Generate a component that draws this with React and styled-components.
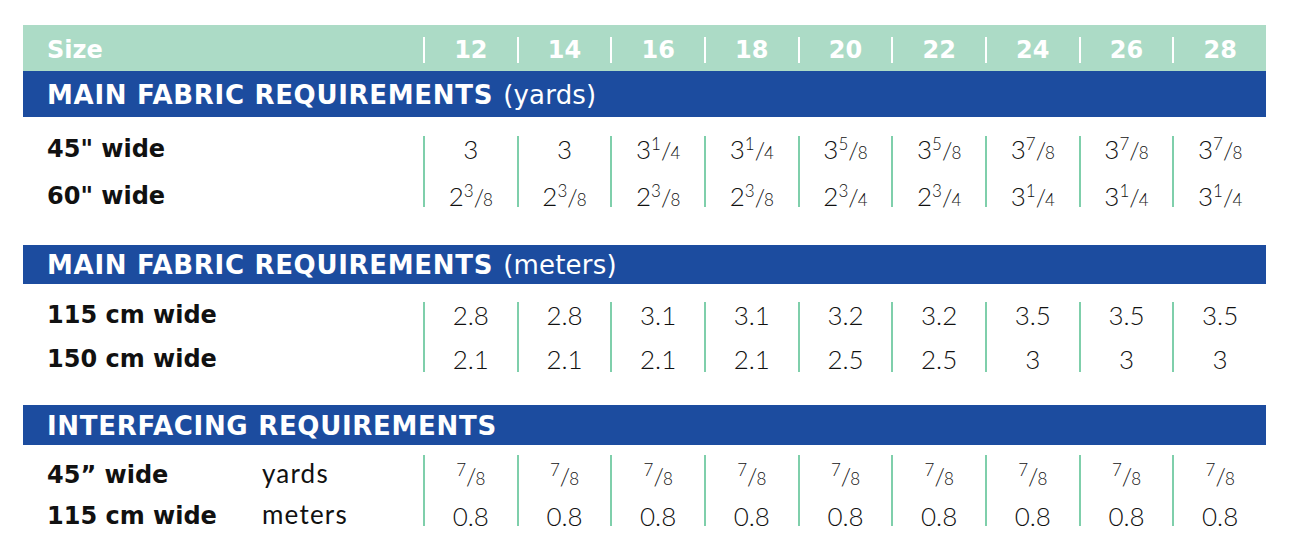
import React from "react";
import styled, { createGlobalStyle } from "styled-components";

const GlobalStyle = createGlobalStyle`
  body {
    margin: 0;
    background: #fff;
    font-family: "DejaVu Sans", "Liberation Sans", sans-serif;
  }
`;

const Table = styled.div`
  width: 1243px;
  margin: 25px 0 0 23px;
  padding-bottom: 18px;
`;

const SizeRow = styled.div`
  display: grid;
  grid-template-columns: 400px repeat(9, 1fr);
  align-items: center;
  height: 46px;
  padding-top: 3px;
  box-sizing: border-box;
  background: #acdbc6;
  color: #fff;
  font-weight: 700;
  font-size: 24px;
`;

const SizeLabel = styled.div`
  padding-left: 24px;
`;

const SizeCell = styled.div`
  border-left: 2px solid #fff;
  line-height: 26px;
  text-align: center;
`;

const Bar = styled.div`
  display: flex;
  align-items: center;
  gap: 10px;
  height: ${(p) => p.$h}px;
  margin-top: ${(p) => p.$top}px;
  padding: 1px 0 0 24px;
  box-sizing: border-box;
  background: #1c4c9f;
  color: #fff;
  font-size: 26px;
  font-weight: 700;
  letter-spacing: 0.7px;

  span {
    font-weight: 400;
    letter-spacing: 0.2px;
  }
`;

const Body = styled.div`
  display: grid;
  grid-template-columns: 400px repeat(9, 1fr);
  height: ${(p) => p.$h}px;
  margin-top: ${(p) => p.$top}px;
`;

const LabelCol = styled.div`
  display: flex;
  flex-direction: column;
  justify-content: space-between;
  padding: ${(p) => p.$pt}px 0 0 24px;
`;

const Label = styled.div`
  display: flex;
  align-items: center;
  height: ${(p) => p.$lh}px;
  font-size: 24px;
  font-weight: 700;
  color: #111;
`;

const Name = styled.span`
  width: 215px;
  flex: none;
`;

const Unit = styled.span`
  position: relative;
  top: -2px;
  font-family: "Lato", sans-serif;
  font-weight: 400;
  font-size: 26px;
  letter-spacing: 1.2px;
`;

const ValueCol = styled.div`
  display: flex;
  flex-direction: column;
  justify-content: space-between;
  align-items: center;
  padding-top: ${(p) => p.$pt}px;
  border-left: 2px solid #7fcfab;
  font-family: "Lato", sans-serif;
  font-size: 26px;
  font-weight: 300;
  color: #111;
`;

const Value = styled.div`
  display: flex;
  align-items: center;
  height: ${(p) => p.$lh}px;
`;

const FracBox = styled.span`
  display: inline-flex;
  align-items: baseline;
  font-feature-settings: "frac" 0, "calt" 0;
`;

const Num = styled.span`
  font-size: 17px;
  position: relative;
  top: -9px;
`;

const Den = styled.span`
  font-size: 17px;
`;

const Slash = styled.span`
  font-size: 24px;
  margin: 0 -1px 0 0;
`;

const Frac = ({ w, n, d }) => (
  <FracBox>
    {w}
    <Num>{n}</Num>
    <Slash>/</Slash>
    <Den>{d}</Den>
  </FracBox>
);

const sizes = [12, 14, 16, 18, 20, 22, 24, 26, 28];

const yards45 = [["3"], ["3"], ["3", 1, 4], ["3", 1, 4], ["3", 5, 8], ["3", 5, 8], ["3", 7, 8], ["3", 7, 8], ["3", 7, 8]];
const yards60 = [["2", 3, 8], ["2", 3, 8], ["2", 3, 8], ["2", 3, 8], ["2", 3, 4], ["2", 3, 4], ["3", 1, 4], ["3", 1, 4], ["3", 1, 4]];
const m115 = ["2.8", "2.8", "3.1", "3.1", "3.2", "3.2", "3.5", "3.5", "3.5"];
const m150 = ["2.1", "2.1", "2.1", "2.1", "2.5", "2.5", "3", "3", "3"];

const show = (v) => (v.length === 1 ? v[0] : <Frac w={v[0]} n={v[1]} d={v[2]} />);

const Section = ({ h, top, lh, pt, labels, rows }) => (
  <Body $h={h} $top={top}>
    <LabelCol $pt={pt}>
      {labels.map((l) => (
        <Label key={l[0]} $lh={lh}>
          <Name>{l[0]}</Name>
          {l[1] && <Unit>{l[1]}</Unit>}
        </Label>
      ))}
    </LabelCol>
    {sizes.map((s, i) => (
      <ValueCol key={s} $pt={pt}>
        {rows.map((r, j) => (
          <Value key={j} $lh={lh}>{r[i]}</Value>
        ))}
      </ValueCol>
    ))}
  </Body>
);

export default function App() {
  return (
    <>
      <GlobalStyle />
      <Table>
        <SizeRow>
          <SizeLabel>Size</SizeLabel>
          {sizes.map((s) => (
            <SizeCell key={s}>{s}</SizeCell>
          ))}
        </SizeRow>

        <Bar $h={46} $top={0}>
          MAIN FABRIC REQUIREMENTS <span>(yards)</span>
        </Bar>
        <Section
          h={71}
          top={19}
          lh={22}
          pt={2}
          labels={[["45\" wide"], ["60\" wide"]]}
          rows={[yards45.map(show), yards60.map(show)]}
        />

        <Bar $h={39} $top={38}>
          MAIN FABRIC REQUIREMENTS <span>(meters)</span>
        </Bar>
        <Section
          h={70}
          top={18}
          lh={26}
          pt={0}
          labels={[["115 cm wide"], ["150 cm wide"]]}
          rows={[m115, m150]}
        />

        <Bar $h={40} $top={33}>
          INTERFACING REQUIREMENTS
        </Bar>
        <Section
          h={71}
          top={10}
          lh={20}
          pt={10}
          labels={[["45\u201d wide", "yards"], ["115 cm wide", "meters"]]}
          rows={[sizes.map(() => <Frac n={7} d={8} />), sizes.map(() => "0.8")]}
        />
      </Table>
    </>
  );
}
